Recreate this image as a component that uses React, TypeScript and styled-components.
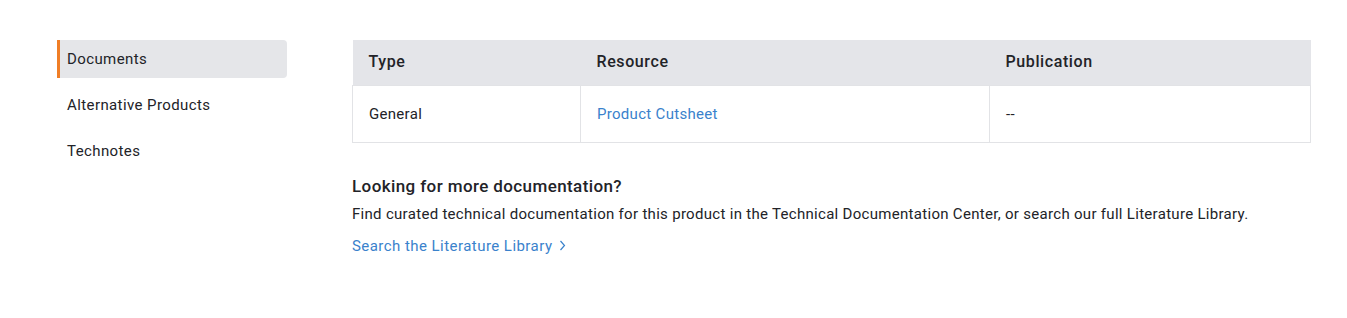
import * as React from "react";
import styled, { createGlobalStyle } from "styled-components";

const GlobalStyle = createGlobalStyle`
	body {
		margin: 0;
		background: #ffffff;
		font-family: Roboto, "Liberation Sans", sans-serif;
		letter-spacing: 0.3px;
		color: #222328;
	}
`;

const Page = styled.div`
	display: flex;
	align-items: flex-start;
	gap: 65px;
	padding: 40px 36px 0 57px;
`;
const Sidebar = styled.nav`
	width: 230px;
	flex-shrink: 0;
	display: flex;
	flex-direction: column;
	gap: 8px;
`;
const NavItem = styled.div<{ $active?: boolean }>`
	height: 38px;
	display: flex;
	align-items: center;
	padding-left: ${(p) => (p.$active ? "7px" : "10px")};
	border-left: ${(p) => (p.$active ? "3px solid #f07e26" : "none")};
	border-radius: 0 4px 4px 0;
	background: ${(p) => (p.$active ? "#e5e6e9" : "transparent")};
	font-size: 15px;
	letter-spacing: 0.4px;
	color: #222328;
	cursor: pointer;
`;
const Main = styled.div`
	flex: 1;
`;
const Table = styled.table`
	width: 100%;
	border-collapse: collapse;
	table-layout: fixed;
`;
const HeadCell = styled.th`
	height: 45px;
	padding: 0 16px 1px;
	box-sizing: border-box;
	background: #e4e5e9;
	text-align: left;
	font-size: 16px;
	font-weight: 500;
	letter-spacing: 0.6px;
	color: #222328;
`;
const Cell = styled.td`
	height: 57px;
	padding: 0 16px;
	box-sizing: border-box;
	border: 1px solid #e2e3e6;
	font-size: 15px;
	color: #222328;
`;
const Link = styled.a`
	color: #3a82cc;
	text-decoration: none;
	cursor: pointer;
`;
const MoreDocs = styled.div`
	margin-top: 32px;
`;
const Heading = styled.h3`
	margin: 0 0 7px;
	font-size: 17px;
	font-weight: 500;
	letter-spacing: 0.4px;
	line-height: 22px;
`;
const Text = styled.p`
	margin: 0 0 12px;
	font-size: 15px;
	line-height: 20px;
`;
const MoreLink = styled(Link)`
	display: inline-flex;
	align-items: center;
	gap: 7px;
	font-size: 15px;
	letter-spacing: 0.45px;
	line-height: 20px;
`;

const Chevron = () => (
	<svg width="7" height="11" viewBox="0 0 7 11" fill="none">
		<path d="M1.5 1L5.5 5.5L1.5 10" stroke="#3a82cc" strokeWidth="1.2" />
	</svg>
);

const App: React.FC = () => {
	const [active, setActive] = React.useState("Documents");
	const items = ["Documents", "Alternative Products", "Technotes"];
	return (
		<>
			<GlobalStyle />
			<Page>
				<Sidebar>
					{items.map((item) => (
						<NavItem key={item} $active={item === active} onClick={() => setActive(item)}>
							{item}
						</NavItem>
					))}
				</Sidebar>
				<Main>
					<Table>
						<colgroup>
							<col style={{ width: "228px" }} />
							<col style={{ width: "409px" }} />
							<col />
						</colgroup>
						<thead>
							<tr>
								<HeadCell>Type</HeadCell>
								<HeadCell>Resource</HeadCell>
								<HeadCell>Publication</HeadCell>
							</tr>
						</thead>
						<tbody>
							<tr>
								<Cell>General</Cell>
								<Cell>
									<Link>Product Cutsheet</Link>
								</Cell>
								<Cell>--</Cell>
							</tr>
						</tbody>
					</Table>
					<MoreDocs>
						<Heading>Looking for more documentation?</Heading>
						<Text>
							Find curated technical documentation for this product in the Technical Documentation
							Center, or search our full Literature Library.
						</Text>
						<MoreLink>
							Search the Literature Library <Chevron />
						</MoreLink>
					</MoreDocs>
				</Main>
			</Page>
		</>
	);
};

export default App;
